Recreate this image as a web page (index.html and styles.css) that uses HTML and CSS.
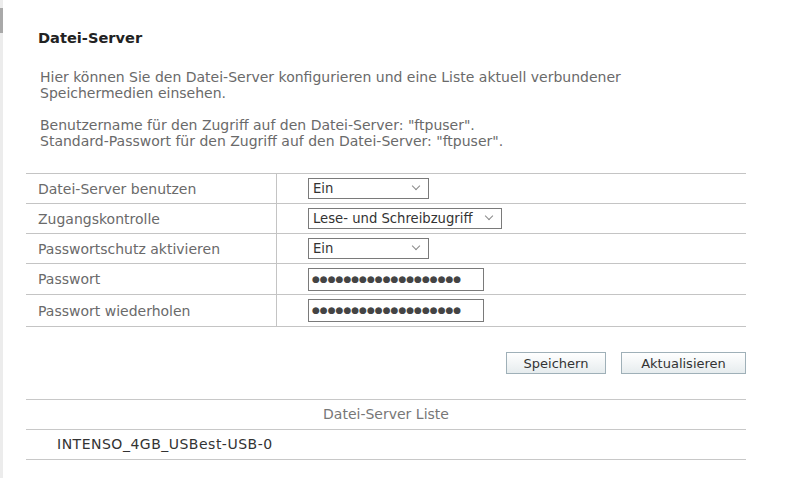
FILE: index.html
```html
<!DOCTYPE html>
<html lang="de">
<head>
<meta charset="utf-8">
<title>Datei-Server</title>
<link rel="stylesheet" href="styles.css">
</head>
<body>
<div class="page">
  <div class="strip"><div class="strip-mark"></div></div>
  <main class="content">
    <h1 class="title">Datei-Server</h1>
    <div class="intro">
      <p>Hier können Sie den Datei-Server konfigurieren und eine Liste aktuell verbundener<br>Speichermedien einsehen.</p>
      <p>Benutzername für den Zugriff auf den Datei-Server: "ftpuser".<br>Standard-Passwort für den Zugriff auf den Datei-Server: "ftpuser".</p>
    </div>
    <table class="form-table">
      <tr>
        <td class="label">Datei-Server benutzen</td>
        <td class="field"><span class="select w-short">Ein<span class="chev"></span></span></td>
      </tr>
      <tr>
        <td class="label">Zugangskontrolle</td>
        <td class="field"><span class="select w-long">Lese- und Schreibzugriff<span class="chev"></span></span></td>
      </tr>
      <tr>
        <td class="label">Passwortschutz aktivieren</td>
        <td class="field"><span class="select w-short">Ein<span class="chev"></span></span></td>
      </tr>
      <tr class="pw-row">
        <td class="label">Passwort</td>
        <td class="field"><span class="pw">●●●●●●●●●●●●●●●●●●●</span></td>
      </tr>
      <tr class="pw-row last">
        <td class="label">Passwort wiederholen</td>
        <td class="field"><span class="pw">●●●●●●●●●●●●●●●●●●●</span></td>
      </tr>
    </table>
    <div class="actions">
      <button class="btn btn-save">Speichern</button>
      <button class="btn btn-refresh">Aktualisieren</button>
    </div>
    <div class="list">
      <div class="list-head">Datei-Server Liste</div>
      <div class="list-item">INTENSO_4GB_USBest-USB-0</div>
    </div>
  </main>
</div>
</body>
</html>
```
FILE: styles.css
```css
html, body {
  margin: 0;
  padding: 0;
  background: #ffffff;
}
body {
  font-family: "DejaVu Sans", Verdana, sans-serif;
  font-size: 14px;
  color: #6a6a6a;
}
.page {
  display: flex;
  min-height: 478px;
}
.strip {
  width: 3px;
  background: #ececec;
  flex: none;
}
.strip-mark {
  margin-top: 8px;
  height: 25px;
  background: #a9a9a9;
}
.content {
  width: 720px;
  margin-left: 23px;
  padding-top: 29px;
}
.title {
  margin: 0 0 0 12px;
  font-size: 14.6px;
  line-height: 18px;
  font-weight: bold;
  color: #222222;
}
.intro {
  margin: 22px 0 0 14px;
}
.intro p {
  margin: 0 0 16px 0;
  line-height: 16px;
  color: #6a6a6a;
}
.form-table {
  width: 720px;
  border-collapse: collapse;
  margin-top: 24px;
}
.form-table td {
  border-top: 1px solid #c4c4c4;
  border-bottom: 1px solid #c4c4c4;
  height: 29px;
  padding: 0;
  vertical-align: middle;
}
.form-table .label {
  width: 238px;
  padding-left: 12px;
  border-right: 1px solid #c4c4c4;
  color: #6a6a6a;
}
.form-table .field {
  padding-left: 31px;
}
.pw-row td {
  height: 30px;
}
.pw-row.last td {
  height: 31px;
}
.select {
  position: relative;
  display: inline-block;
  box-sizing: border-box;
  height: 21px;
  line-height: 19px;
  border: 1px solid #7a7a7a;
  padding-left: 4px;
  color: #333333;
  font-size: 13.2px;
  vertical-align: middle;
}
.w-short { width: 121px; }
.w-long { width: 194px; padding-right: 26px; }
.chev {
  position: absolute;
  right: 9px;
  top: 4px;
  width: 5px;
  height: 5px;
  border-right: 1px solid #8a8a8a;
  border-bottom: 1px solid #8a8a8a;
  transform: rotate(45deg);
}
.pw {
  display: inline-block;
  box-sizing: border-box;
  width: 176px;
  height: 23px;
  line-height: 21px;
  border: 1px solid #7a7a7a;
  padding-left: 3px;
  color: #444444;
  font-size: 9px;
  vertical-align: middle;
  overflow: hidden;
  white-space: nowrap;
}
.actions {
  display: flex;
  justify-content: flex-end;
  gap: 15px;
  margin-top: 25px;
}
.btn {
  font-family: "DejaVu Sans", Verdana, sans-serif;
  font-size: 13px;
  color: #333333;
  height: 22px;
  border: 1px solid #9fb0b8;
  background: linear-gradient(#ffffff, #e6ecee);
  padding: 0;
  margin: 0;
}
.btn-save { width: 100px; }
.btn-refresh { width: 125px; }
.list {
  margin-top: 25px;
}
.list-head {
  border-top: 1px solid #c8c8c8;
  border-bottom: 1px solid #c8c8c8;
  height: 29px;
  line-height: 29px;
  text-align: center;
  color: #777777;
}
.list-item {
  border-bottom: 1px solid #c8c8c8;
  height: 29px;
  line-height: 29px;
  padding-left: 31px;
  color: #333333;
  letter-spacing: 0.5px;
}
```
